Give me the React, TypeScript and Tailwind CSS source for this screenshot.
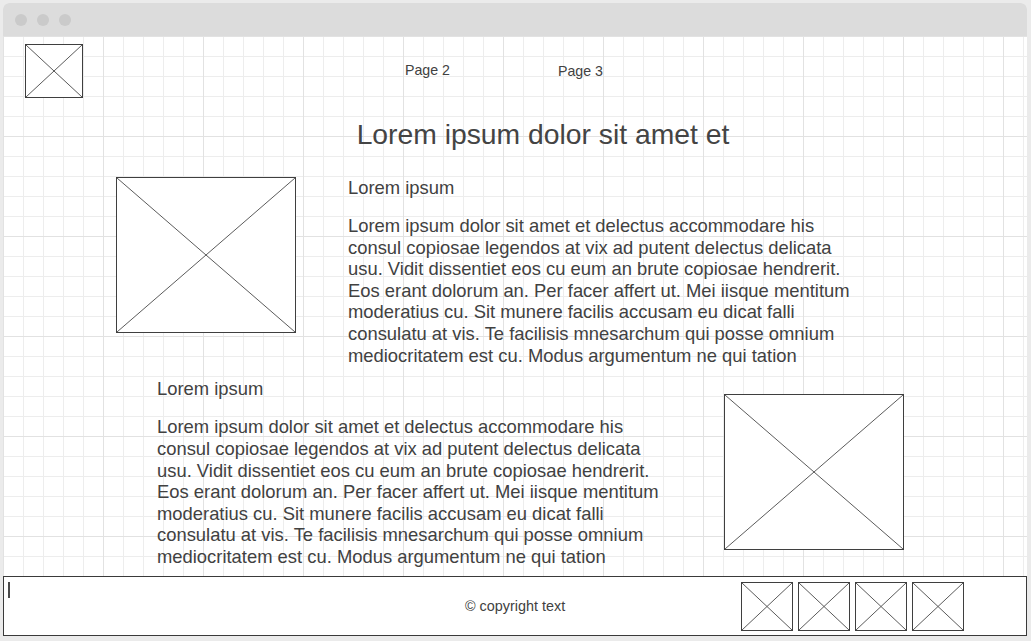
import React from 'react';

function Placeholder({ className }: { className: string }) {
  return (
    <div className={`relative border border-[#3f3f3f] bg-white shrink-0 ${className}`}>
      <svg className="absolute inset-0 h-full w-full" preserveAspectRatio="none" viewBox="0 0 100 100">
        <line x1="0" y1="0" x2="100" y2="100" stroke="#5a5a5a" strokeWidth="1" vectorEffect="non-scaling-stroke" />
        <line x1="100" y1="0" x2="0" y2="100" stroke="#5a5a5a" strokeWidth="1" vectorEffect="non-scaling-stroke" />
      </svg>
    </div>
  );
}

const body =
  'Lorem ipsum dolor sit amet et delectus accommodare his consul copiosae legendos at vix ad putent delectus delicata usu. Vidit dissentiet eos cu eum an brute copiosae hendrerit. Eos erant dolorum an. Per facer affert ut. Mei iisque mentitum moderatius cu. Sit munere facilis accusam eu dicat falli consulatu at vis. Te facilisis mnesarchum qui posse omnium mediocritatem est cu. Modus argumentum ne qui tation';

function TextBlock() {
  return (
    <div className="w-[514px] shrink-0 text-[18.4px] leading-[21.6px]">
      <p>Lorem ipsum</p>
      <p className="mt-[16.5px]">{body}</p>
    </div>
  );
}

export default function App() {
  return (
    <div className="h-[641px] w-[1031px] overflow-hidden bg-[#ebebeb] pl-[3px] pt-[3px] font-['Liberation_Sans',Arial,sans-serif] text-[#414141]">
      <div className="flex h-[633px] w-[1024px] flex-col overflow-hidden rounded-t-[6px] bg-white">
        {/* title bar */}
        <div className="flex h-[33px] shrink-0 items-center gap-[10px] bg-[#dcdcdc] pl-[12px]">
          <span className="h-[12px] w-[12px] rounded-full bg-[#cacaca]" />
          <span className="h-[12px] w-[12px] rounded-full bg-[#cacaca]" />
          <span className="h-[12px] w-[12px] rounded-full bg-[#cacaca]" />
        </div>

        {/* canvas */}
        <div className="h-[540px] shrink-0 bg-[linear-gradient(to_right,#e2e2e2_1px,transparent_1px),linear-gradient(to_bottom,#e2e2e2_1px,transparent_1px),linear-gradient(to_right,#ededed_1px,transparent_1px),linear-gradient(to_bottom,#ededed_1px,transparent_1px)] bg-[size:100px_100px,100px_100px,20px_20px,20px_20px]">
          <div className="flex items-start pl-[22px] pt-[8px]">
            <Placeholder className="h-[54px] w-[58px]" />
            <nav className="ml-[322px] flex items-start text-[14.2px] leading-[16px]">
              <a className="mt-[18px] w-[153px]">Page 2</a>
              <a className="mt-[19px]">Page 3</a>
            </nav>
          </div>

          <h1 className="mt-[20px] pl-[56px] text-center text-[28.3px] leading-[32px] text-[#444]">
            Lorem ipsum dolor sit amet et
          </h1>

          <section className="mt-[27px] flex items-start pl-[113px]">
            <Placeholder className="h-[156px] w-[180px]" />
            <div className="ml-[52px]">
              <TextBlock />
            </div>
          </section>

          <section className="mt-[12px] flex items-start pl-[154px]">
            <TextBlock />
            <Placeholder className="ml-[53px] mt-[16px] h-[156px] w-[180px]" />
          </section>
        </div>

        {/* footer */}
        <footer className="flex h-[60px] shrink-0 items-start border border-[#3a3a3a] bg-white">
          <span className="ml-[4px] mt-[5px] h-[16px] w-[2px] bg-[#4a4a4a]" />
          <p className="ml-[455px] mt-[21px] text-[14.4px] leading-[16px]">© copyright text</p>
          <div className="ml-auto mr-[62px] mt-[5px] flex gap-[5px]">
            <Placeholder className="h-[49px] w-[52px]" />
            <Placeholder className="h-[49px] w-[52px]" />
            <Placeholder className="h-[49px] w-[52px]" />
            <Placeholder className="h-[49px] w-[52px]" />
          </div>
        </footer>
      </div>
    </div>
  );
}
